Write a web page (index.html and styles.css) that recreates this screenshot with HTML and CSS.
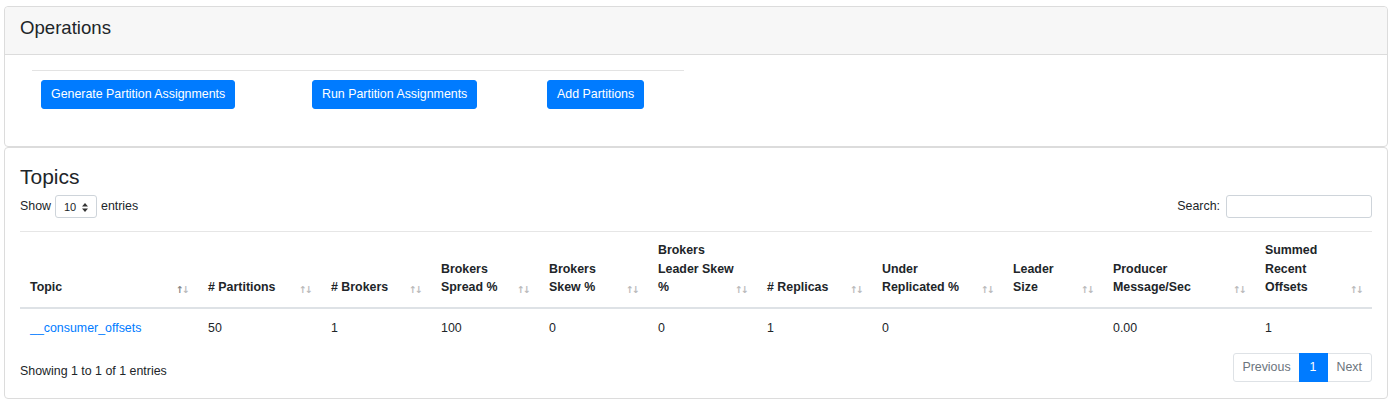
FILE: index.html
```html
<!DOCTYPE html>
<html lang="en">
<head>
<meta charset="utf-8">
<title>Topics</title>
<link rel="stylesheet" href="styles.css">
</head>
<body>
<div class="card">
  <div class="card-header">Operations</div>
  <div class="ops-body">
    <div class="ops-inner">
      <div class="ops-buttons">
        <span><button class="btn">Generate Partition Assignments</button></span>
        <span><button class="btn">Run Partition Assignments</button></span>
        <span><button class="btn">Add Partitions</button></span>
      </div>
    </div>
  </div>
</div>
<div class="card">
  <div class="topics-body">
    <h3 class="title">Topics</h3>
    <div class="controls">
      <div class="length">Show
        <span class="select-box">10
          <svg width="6" height="9" viewBox="0 0 6 9"><path d="M0 3.5 L3 0 L6 3.5 Z M0 5.5 L3 9 L6 5.5 Z" fill="#333"/></svg>
        </span>
        entries</div>
      <div class="search">Search: <span class="search-input"></span></div>
    </div>
    <table class="topics">
      <colgroup>
        <col style="width:178px"><col style="width:123px"><col style="width:110px"><col style="width:108px">
        <col style="width:109px"><col style="width:109px"><col style="width:115px"><col style="width:131px">
        <col style="width:100px"><col style="width:152px"><col style="width:117px">
      </colgroup>
      <thead>
        <tr>
          <th class="sorted">Topic</th>
          <th># Partitions</th>
          <th># Brokers</th>
          <th>Brokers<br>Spread %</th>
          <th>Brokers<br>Skew %</th>
          <th>Brokers<br>Leader Skew<br>%</th>
          <th># Replicas</th>
          <th>Under<br>Replicated %</th>
          <th>Leader<br>Size</th>
          <th>Producer<br>Message/Sec</th>
          <th>Summed<br>Recent<br>Offsets</th>
        </tr>
      </thead>
      <tbody>
        <tr>
          <td><a href="#" class="topic-link">__consumer_offsets</a></td>
          <td>50</td>
          <td>1</td>
          <td>100</td>
          <td>0</td>
          <td>0</td>
          <td>1</td>
          <td>0</td>
          <td></td>
          <td>0.00</td>
          <td>1</td>
        </tr>
      </tbody>
    </table>
    <div class="footer">
      <div class="info">Showing 1 to 1 of 1 entries</div>
      <ul class="pagination">
        <li class="page disabled">Previous</li>
        <li class="page active">1</li>
        <li class="page disabled">Next</li>
      </ul>
    </div>
  </div>
</div>
</body>
</html>
```
FILE: styles.css
```css
* { box-sizing: border-box; }

body {
  margin: 6px 12px 0 4px;
  font-family: "Liberation Sans", Arial, sans-serif;
  font-size: 12.4px;
  line-height: 18.6px;
  color: #212529;
  background: #fff;
}

.card {
  border: 1px solid #dcdcdc;
  border-radius: 4px;
  background: #fff;
}

.card-header {
  background: #f7f7f7;
  border-bottom: 1px solid #dcdcdc;
  padding: 9px 15px 0;
  font-size: 18.6px;
  line-height: 23px;
  height: 48px;
  border-radius: 4px 4px 0 0;
}

.ops-body {
  padding: 15px 15px 37px;
}

.ops-inner {
  margin-left: 12px;
  width: 652px;
  border-top: 1px solid #e3e3e3;
}

.ops-buttons {
  display: grid;
  grid-template-columns: 271px 235px auto;
  padding-left: 9px;
  margin-top: 9px;
}

.btn {
  display: block;
  font-family: inherit;
  font-size: 12.4px;
  line-height: 19px;
  height: 29px;
  color: #fff;
  background: #007bff;
  border: 1px solid #007bff;
  border-radius: 3px;
  padding: 4px 9px;
  cursor: pointer;
}

.topics-body {
  padding: 16px 15px 16px;
}

.title {
  margin: 0;
  font-size: 21px;
  line-height: 25px;
  font-weight: 400;
}

.controls {
  display: flex;
  justify-content: space-between;
  align-items: center;
  margin-top: 6px;
  height: 23px;
}

.length {
  display: flex;
  align-items: center;
  gap: 4px;
}

.select-box {
  display: inline-flex;
  align-items: center;
  gap: 6px;
  width: 42px;
  height: 23px;
  padding-left: 8px;
  border: 1px solid #ced4da;
  border-radius: 3px;
  font-size: 11px;
  padding-top: 1px;
}

.search {
  display: flex;
  align-items: center;
  gap: 6px;
}

.search-input {
  display: inline-block;
  width: 146px;
  height: 23px;
  border: 1px solid #ced4da;
  border-radius: 3px;
}

.topics {
  margin-top: 13px;
  width: 1352px;
  table-layout: fixed;
  border-collapse: collapse;
}

.topics th {
  position: relative;
  text-align: left;
  vertical-align: bottom;
  white-space: nowrap;
  font-weight: 700;
  padding: 9px 22px 10px 10px;
  border-top: 1px solid #e6e6e6;
  border-bottom: 2px solid #dee2e6;
}

.topics th::before,
.topics th::after {
  position: absolute;
  bottom: 11px;
  font-family: "DejaVu Sans", sans-serif;
  font-size: 9.5px;
  line-height: 12px;
  color: #bbb;
}

.topics th::before { content: "\2191"; right: 14px; }
.topics th::after { content: "\2193"; right: 8px; }
.topics th.sorted::before { color: #888; }

.topics td {
  padding: 10px 10px 10px;
  vertical-align: top;
}

.topic-link {
  color: #007bff;
  text-decoration: none;
}

.footer {
  display: flex;
  justify-content: space-between;
  align-items: flex-start;
}

.info {
  padding-top: 15px;
}

.pagination {
  display: flex;
  list-style: none;
  margin: 6px 0 0;
  padding: 0;
}

.page {
  height: 29px;
  line-height: 27px;
  padding: 0 9px;
  border: 1px solid #dee2e6;
  margin-left: -1px;
  color: #6c757d;
}

.page:first-child {
  border-radius: 3px 0 0 3px;
  margin-left: 0;
  padding: 0 8px;
}

.page:last-child {
  border-radius: 0 3px 3px 0;
}

.page.active {
  background: #007bff;
  border-color: #007bff;
  color: #fff;
  padding: 0 10px;
  position: relative;
}
```
